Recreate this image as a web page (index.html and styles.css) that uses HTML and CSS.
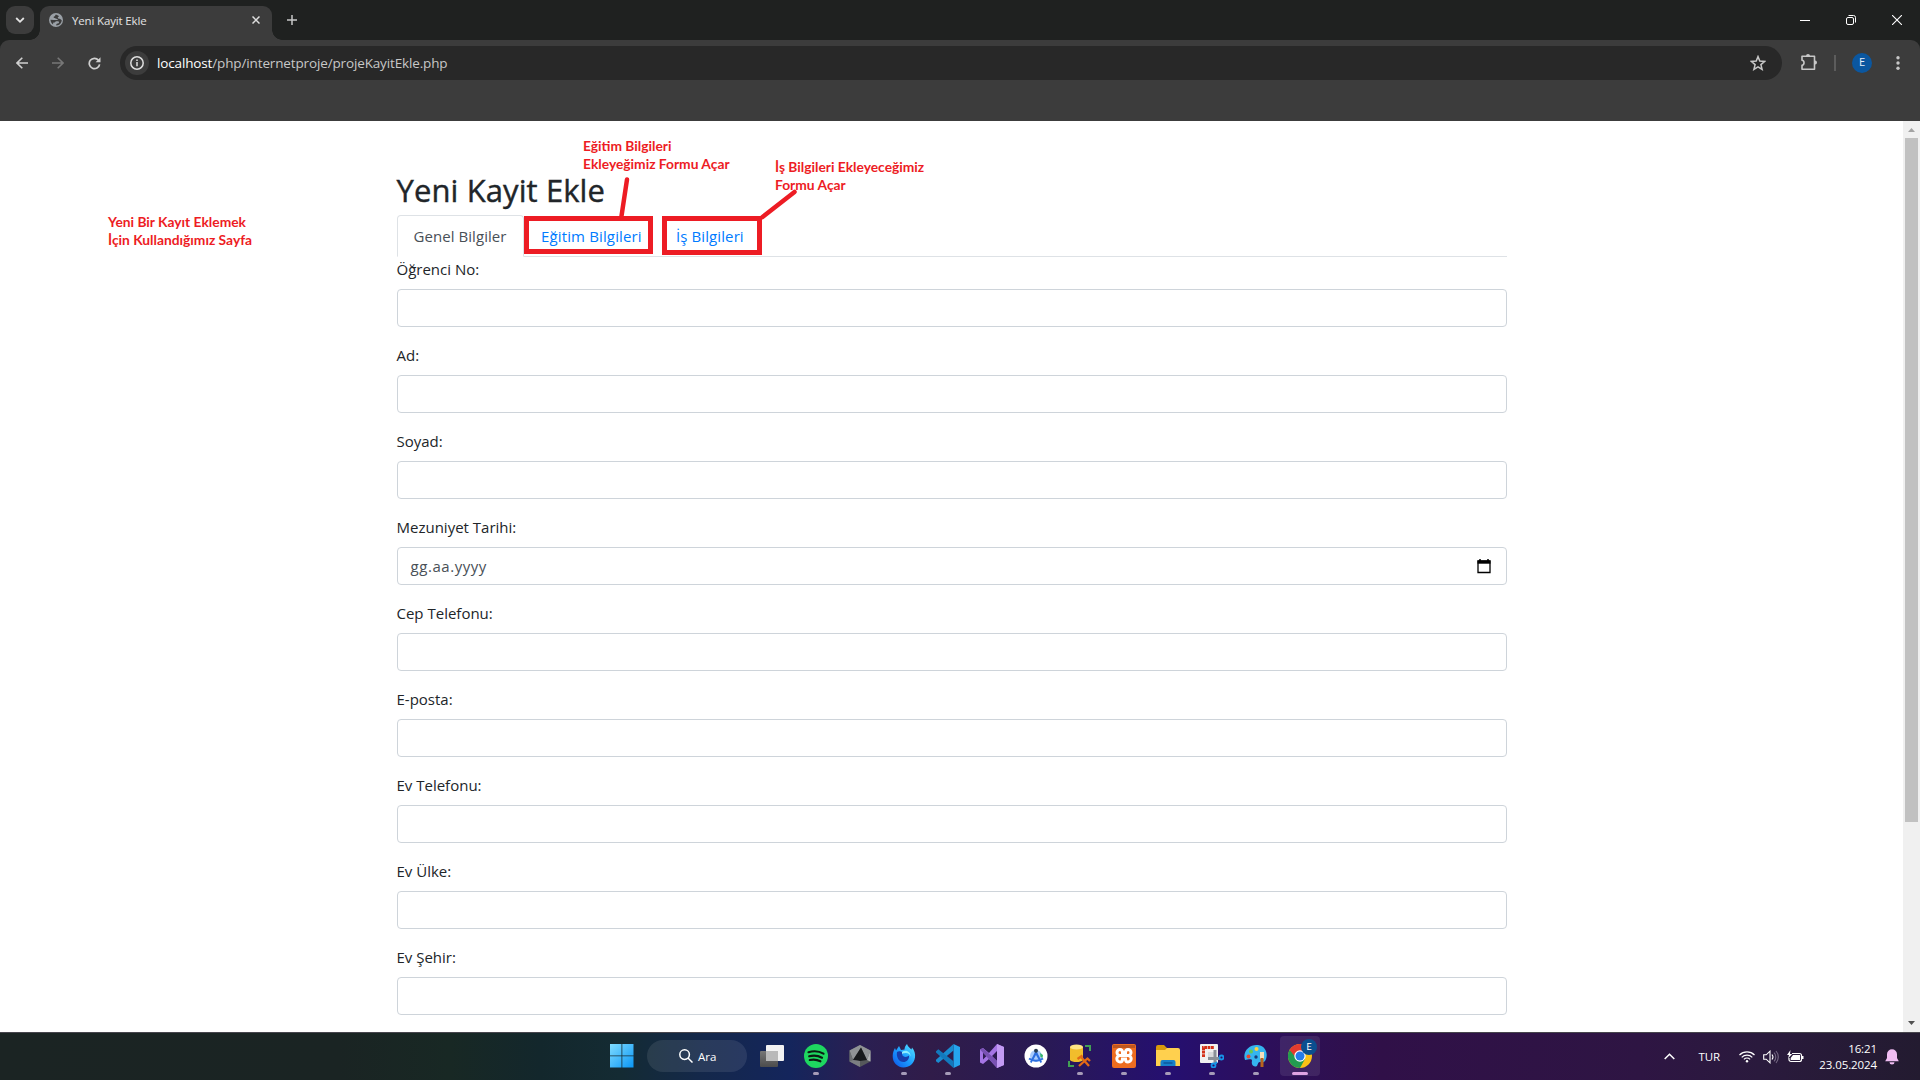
FILE: index.html
```html
<!DOCTYPE html>
<html lang="tr">
<head>
<meta charset="utf-8">
<title>Yeni Kayit Ekle</title>
<link rel="stylesheet" href="styles.css">
</head>
<body>
<div class="screen">
  <header class="chrome">
    <div class="tabstrip">
      <button class="tab-search"><svg width="10" height="10" viewBox="0 0 10 10"><path d="M1.2 3 5 6.8 8.8 3" fill="none" stroke="#e3e3e3" stroke-width="1.8"/></svg></button>
      <div class="browser-tab">
        <svg class="favicon" width="14" height="14" viewBox="0 0 14 14"><circle cx="7" cy="7" r="7" fill="#9aa0a6"/><path d="M6.8 1.4c-1 1-.2 1.700-1.800 2.200-.8.500-.3 1.400.5 1.300 1.200-.2 1 .9 2.200.9 1 0 1.300.8.800 1.300H4.800L1.500 6.800c0 1.500.8 3.800 2.600 4.700V10.200c0-.7.800-.6 1.400-.7.900-.2.700-1.200 1.800-1.200h1.400c.7 0 1.400.500 1.300 1.300-.1.700-.8.900-1.500 1-1 .1-1.300.8-1.200 1.800 3 .2 5.500-2.300 5.400-5.400-1.200-.2-1.100-1.200-2.200-1.200-.9 0-1.700-.4-1.700-1.300 0-.8 1.300-.6 1.200-1.500C8.400 2.200 7.600 1.500 6.800 1.400z" fill="#3c3c3c"/></svg>
        <span class="tab-title">Yeni Kayit Ekle</span>
        <svg width="8" height="8" viewBox="0 0 8 8"><path d="M.5.5l7 7M7.500.5l-7 7" stroke="#dedede" stroke-width="1.500"/></svg>
      </div>
      <svg class="new-tab" width="10" height="10" viewBox="0 0 10 10"><path d="M5 0v10M0 5h10" stroke="#c7c7c7" stroke-width="1.500"/></svg>
      <div class="window-buttons">
        <svg width="10" height="10" viewBox="0 0 10 10"><path d="M0 5.500h10" stroke="#fff"/></svg>
        <svg width="10" height="10" viewBox="0 0 10 10" fill="none" stroke="#fff"><rect x=".5" y="2.500" width="7" height="7" rx="1.500"/><path d="M2.500.5h5a2 2 0 0 1 2 2v5"/></svg>
        <svg width="10" height="10" viewBox="0 0 10 10"><path d="M0 0l10 10M10 0L0 10" stroke="#fff" stroke-width="1.100"/></svg>
      </div>
    </div>
    <div class="toolbar">
      <div class="nav-buttons">
        <svg width="12" height="12" viewBox="0 0 12 12" fill="none" stroke="#d0d0d0" stroke-width="1.600"><path d="M12 6H1.200M6.300.7 1 6l5.300 5.300"/></svg>
        <svg width="12" height="12" viewBox="0 0 12 12" fill="none" stroke="#777" stroke-width="1.600"><path d="M0 6h10.800M5.700.7 11 6l-5.300 5.300"/></svg>
        <svg width="13" height="13" viewBox="0 0 13 13"><path d="M11.600 7.300A5.200 5.200 0 1 1 10.500 3.200" fill="none" stroke="#d0d0d0" stroke-width="1.700"/><path d="M12.500.3v5H7.600z" fill="#d0d0d0"/></svg>
      </div>
      <div class="omnibox">
        <span class="site-info"><svg width="14" height="14" viewBox="0 0 14 14"><circle cx="7" cy="7" r="6.200" fill="none" stroke="#dedede" stroke-width="1.500"/><path d="M7 6v4.300M7 3.500v1.500" stroke="#dedede" stroke-width="1.500"/></svg></span>
        <span class="url"><b>localhost</b>/php/internetproje/projeKayitEkle.php</span>
        <svg class="star" width="16" height="16" viewBox="0 0 16 16"><path d="M8 1.600l1.800 4.500 4.800.4-3.700 3.100 1.200 4.800L8 11.800l-4.100 2.600 1.200-4.800L1.400 6.500l4.800-.4z" fill="none" stroke="#c7c7c7" stroke-width="1.500"/></svg>
      </div>
      <svg class="ext" width="18" height="18" viewBox="0 0 18 18"><path d="M2 3.300h12.500v13H2v-3.900c2.700-.4 2.700-4.700 0-5.100z" fill="none" stroke="#c7c7c7" stroke-width="1.600" stroke-linejoin="round"/><path d="M6 3a2 2 0 0 1 4 0zM15 7.500a2 2 0 0 1 0 4z" fill="#c7c7c7"/></svg>
      <span class="divider"></span>
      <span class="avatar">E</span>
      <svg class="menu" width="4" height="14" viewBox="0 0 4 14" fill="#c7c7c7"><circle cx="2" cy="1.800" r="1.700"/><circle cx="2" cy="7" r="1.700"/><circle cx="2" cy="12.200" r="1.700"/></svg>
    </div>
  </header>

  <main class="viewport">
    <div class="page">
      <div class="container">
        <h2>Yeni Kayit Ekle</h2>
        <ul class="nav-tabs">
          <li class="active genel">Genel Bilgiler</li>
          <li class="egitim">Eğitim Bilgileri</li>
          <li class="is">İş Bilgileri</li>
        </ul>
        <form>
          <div class="form-group"><label>Öğrenci No:</label><div class="control"></div></div>
          <div class="form-group"><label>Ad:</label><div class="control"></div></div>
          <div class="form-group"><label>Soyad:</label><div class="control"></div></div>
          <div class="form-group"><label>Mezuniyet Tarihi:</label><div class="control date"><span>gg.aa.yyyy</span><svg width="14" height="15" viewBox="0 0 14 15"><path d="M3 0v2M11 0v2" stroke="#000" stroke-width="1.500"/><path d="M1 2h12v11.500H1z" fill="none" stroke="#000" stroke-width="1.300"/><path d="M.5 1.500h13v3.200H.5z"/></svg></div></div>
          <div class="form-group"><label>Cep Telefonu:</label><div class="control"></div></div>
          <div class="form-group"><label>E-posta:</label><div class="control"></div></div>
          <div class="form-group"><label>Ev Telefonu:</label><div class="control"></div></div>
          <div class="form-group"><label>Ev Ülke:</label><div class="control"></div></div>
          <div class="form-group"><label>Ev Şehir:</label><div class="control"></div></div>
        </form>
      </div>
    </div>
    <div class="scrollbar">
      <svg width="7" height="4" viewBox="0 0 7 4"><path d="M0 4 3.500 0 7 4z" fill="#a3a3a3"/></svg>
      <div class="thumb"></div>
      <svg width="7" height="4" viewBox="0 0 7 4"><path d="M0 0l3.500 4L7 0z" fill="#505050"/></svg>
    </div>
  </main>

  <footer class="taskbar">
    <div class="apps">
      <div class="slot"><svg width="24" height="24" viewBox="0 0 24 24"><defs><linearGradient id="win" x1="0" y1="0" x2="1" y2="1"><stop offset="0" stop-color="#80dcff"/><stop offset="1" stop-color="#0a96f5"/></linearGradient></defs><path d="M0 0h11.500v11.500H0zM12.300 0h11.200v11.500H12.300zM0 12.300h11.500v11.200H0zM12.300 12.300h11.200v11.200H12.300z" fill="url(#win)"/></svg></div>
      <div class="search"><svg width="14" height="14" viewBox="0 0 14 14" fill="none" stroke="#fff" stroke-width="1.500"><circle cx="5.600" cy="5.600" r="4.800"/><path d="M9 9l4.500 4.500"/></svg><span>Ara</span></div>
      <div class="slot"><svg width="24" height="24" viewBox="0 0 24 24"><defs><linearGradient id="tv" x1="0" y1="0" x2="0" y2="1"><stop offset="0" stop-color="#777"/><stop offset="1" stop-color="#4c4c4c"/></linearGradient></defs><rect x="6" y="1" width="18" height="16" rx="1" fill="#f2f2f2"/><rect y="7" width="18" height="16" rx="1" fill="url(#tv)"/><path d="M6 7h12v10H6z" fill="#b9b9b9"/></svg></div>
      <div class="slot open"><svg width="24" height="24" viewBox="0 0 24 24"><circle cx="12" cy="12" r="12" fill="#1ed760"/><path d="M4.500 8.200c5-1.500 10.800-1 15 1.400M5.200 12.300c4.400-1.200 9-.7 12.800 1.400M5.800 16c3.700-.9 7.300-.5 10.600 1.300" fill="none" stroke="#0c1b12" stroke-width="2.200" stroke-linecap="round"/></svg></div>
      <div class="slot"><svg width="22" height="24" viewBox="0 0 22 24"><path d="M11 1l10.500 5.500v11L11 23 .5 17.500v-11z" fill="#55585b"/><path d="M11 1l10.500 5.500L18 16 12 3.500 4 16 .5 6.500z" fill="#909396"/><path d="M.5 6.500L4 16l-3.500 1.500z" fill="#6b6e72"/><path d="M12 3.500L18 16l-7 1-7-1z" fill="#17191c"/><path d="M.5 17.500L4 16l7 1v6z" fill="#7b7e82"/><path d="M18 16l3.500-9.500v11z" fill="#b0b2b5"/></svg></div>
      <div class="slot open"><svg width="24" height="24" viewBox="0 0 24 24"><defs><linearGradient id="ff" x1="1" y1="0" x2="0" y2="1"><stop offset="0" stop-color="#5be9ff"/><stop offset=".5" stop-color="#1c9fff"/><stop offset="1" stop-color="#0b51e6"/></linearGradient></defs><path d="M15 0c1 3 3 4 4.500 5.500l.5-2c2.500 3 3.500 6 3 10C22 20 17 23.500 11.500 23.500 5 23 .5 18.500.7 12 .7 9 1.700 6 3 4l1 2.500L7 2l2 4 3.500-.5C12.500 3.500 13.500 1.500 15 0z" fill="url(#ff)"/><path d="M5 8c2-1.500 4-.5 5 0h3l-3 2.500c1 3 5 3 7 1 .5 4-2.500 6.500-5.500 6.500C7 18 4 13 5 8z" fill="#183caa"/><path d="M10 8c4-3 9 0 8.500 4.500C18 9 14 8 10 10z" fill="#8ceeff"/></svg></div>
      <div class="slot open"><svg width="24" height="24" viewBox="0 0 24 24"><path d="M17.500 0L24 3v18l-6.500 3z" fill="#25a4ee"/><path d="M17.500 0v6.500L2.300 19 0 17.200v-1.500z" fill="#198bd0"/><path d="M0 7.300L2.300 5.300 17.500 17.300V24L0 8.500z" fill="#1279bd"/></svg></div>
      <div class="slot"><svg width="24" height="24" viewBox="0 0 24 24"><path d="M0 5.500L3 4l6 5L17 0l7 3v18l-7 3-8-9-6 5-3-1.500zM3 8.500v7L6.500 12zM17 7l-5 5 5 5z" fill="#a575e5" fill-rule="evenodd"/><path d="M17 0l7 3v18l-7 3z" fill="#c39bf4"/><path d="M0 5.500L3 4l14 13v7z" fill="#7952b3"/></svg></div>
      <div class="slot"><svg width="24" height="24" viewBox="0 0 24 24"><circle cx="12" cy="12" r="11.500" fill="#fff"/><circle cx="12" cy="12" r="6" fill="#a9cbfc"/><path d="M12 6l6 12-1.500 1L12 11l-4.500 8L6 18z" fill="#2d6fe0"/><path d="M5 14.500c4 3 10 3 14 0" fill="none" stroke="#2d6fe0" stroke-width="2"/><circle cx="12" cy="6.700" r="2" fill="#263b50"/><path d="M16 9l3 2-.5 3-2-1z" fill="#35b36a"/></svg></div>
      <div class="slot open"><svg width="24" height="24" viewBox="0 0 24 24"><path d="M17 2h5v5M1 17v5h5" fill="none" stroke="#42a054" stroke-width="2"/><path d="M2 3v13c2 2.700 11 2.700 13 0V3z" fill="#f1bd2c"/><ellipse cx="8.500" cy="3" rx="6.500" ry="2.500" fill="#ffe484"/><path d="M11 22l9-8M13 13l8 9M9.500 15l5-3.500M19 14l3 3" stroke="#e36a16" stroke-width="2.300"/></svg></div>
      <div class="slot open"><svg width="24" height="24" viewBox="0 0 24 24"><rect width="24" height="24" rx="2" fill="#ee6d20"/><path d="M1 1h22v3H1z" fill="#bd5720"/><g fill="none" stroke="#fff" stroke-width="3"><path d="M8 5.500a3 3 0 0 0 0 6h8a3 3 0 0 0 0-6c-2 0-2.500 1.500-2.500 3h-3c0-1.500-.5-3-2.500-3zM8 11.500a3.200 3.200 0 0 0 0 6.400c2 0 2.500-1.500 2.500-3h3c0 1.500.5 3 2.500 3a3.200 3.200 0 0 0 0-6.400"/></g></svg></div>
      <div class="slot open"><svg width="24" height="24" viewBox="0 0 24 24"><path d="M0 3a2 2 0 0 1 2-2h6l3 3h11v8H0z" fill="#d99a0b"/><path d="M0 6h9l2-2h11a2 2 0 0 1 2 2v16H0z" fill="#ffd04e"/><path d="M4.500 22v-4a2 2 0 0 1 2-2h11a2 2 0 0 1 2 2v4z" fill="#1780cb"/><path d="M7.500 19h9" stroke="#0e579b" stroke-width="1.500"/></svg></div>
      <div class="slot open"><svg width="24" height="24" viewBox="0 0 24 24"><rect width="18" height="19" rx="1" fill="#f0f0f0"/><path d="M3.500 13V3.500H14" fill="none" stroke="#d33119" stroke-width="3" stroke-dasharray="2.800 .6"/><path d="M8 8h6v6H8z" fill="#d8dadc"/><path d="M15 6v14M8 14.500h12" stroke="#8a9097" stroke-width="3"/><g fill="none" stroke="#1694ea" stroke-width="1.800"><circle cx="21.500" cy="13.500" r="2"/><circle cx="13.500" cy="21.500" r="2"/><path d="M15 20l2-2"/></g></svg></div>
      <div class="slot open"><svg width="24" height="24" viewBox="0 0 24 24"><path d="M1 16C-2 7 6 0 14 1c8 1 10 9 8 14-1 3-3 4-6 3-2 0-2 2-3 4-4 2-6-2-5-5 0-3-4-1-7-1z" fill="#35b5ef"/><circle cx="4.500" cy="12.500" r="2" fill="#e54832"/><circle cx="7" cy="7.500" r="2" fill="#65c754"/><circle cx="12.500" cy="5" r="2" fill="#ffd23f"/><circle cx="12" cy="13" r="1.700" fill="#163e7c"/><path d="M16 8h4v7h-4z" fill="#f3dfbc"/><path d="M16.500 14h3v9h-3z" fill="#b8641e"/></svg></div>
      <div class="slot open current"><svg width="24" height="24" viewBox="0 0 24 24"><circle cx="12" cy="12" r="12" fill="#fbc116"/><path d="M12 12L1.600 6A12 12 0 0 0 12 24l5-9z" fill="#229c50"/><path d="M12 12H6.500L1.600 6a12 12 0 0 1 20.800 0z" fill="#e33b2e"/><circle cx="12" cy="12" r="5.700" fill="#fff"/><circle cx="12" cy="12" r="4.500" fill="#267ce9"/></svg><span class="badge">E</span></div>
    </div>
    <div class="tray">
      <svg class="chev" width="11" height="7" viewBox="0 0 11 7"><path d="M.7 6l4.800-4.800L10.300 6" fill="none" stroke="#fff" stroke-width="1.500"/></svg>
      <span class="lang">TUR</span>
      <svg class="wifi" width="16" height="13" viewBox="0 0 16 13" fill="none" stroke="#fff" stroke-width="1.200"><path d="M.5 5a10.600 10.600 0 0 1 15 0M2.700 7.300a7.500 7.500 0 0 1 10.600 0M4.900 9.400a4.400 4.400 0 0 1 6.200 0"/><circle cx="8" cy="11.300" r="1.200" fill="#fff" stroke="none"/></svg>
      <svg class="vol" width="17" height="14" viewBox="0 0 17 14" fill="none" stroke="#fff" stroke-width="1.100"><path d="M.7 4.800h2.500L7 1.200v11.600L3.200 9.200H.7z"/><path d="M9 4.500a4 4 0 0 1 0 5"/><path d="M11 2.700a6 6 0 0 1 0 8.600M13 1a9 9 0 0 1 0 12" stroke="#776a85"/></svg>
      <svg class="bat" width="17" height="14" viewBox="0 0 17 14"><path d="M5 3.500h7.500a2 2 0 0 1 2 2v4a2 2 0 0 1-2 2H4a2 2 0 0 1-2-2V8" fill="none" stroke="#fff" stroke-width="1.200"/><path d="M6 5h7v5H3.700V8zM15 6h1.500v3H15zM3.500 0L0 5h2L1 8.500 5.200 4H3z" fill="#fff"/></svg>
      <div class="clock"><span>16:21</span><span>23.05.2024</span></div>
      <svg class="bell" width="14" height="16" viewBox="0 0 14 16" fill="#f1bdf3"><path d="M7 .3a5 5 0 0 1 5 5V9l1.800 3.300H.2L2 9V5.300a5 5 0 0 1 5-5zM4.500 13.300h5a2.500 2.200 0 0 1-5 0z"/></svg>
    </div>
  </footer>

  <div class="note note-page">Yeni Bir Kayıt Eklemek<br>İçin Kullandığımız Sayfa</div>
  <div class="note note-edu">Eğitim Bilgileri<br>Ekleyeğimiz Formu Açar</div>
  <div class="note note-job">İş Bilgileri Ekleyeceğimiz<br>Formu Açar</div>
  <svg class="marks" width="280" height="90" viewBox="510 170 280 90" fill="none" stroke="#ed1c24"><path d="M526.500 218.500h124v33h-124zM664.500 218.500h95v34h-95z" stroke-width="5"/><path d="M627 179.500L621.500 216" stroke-width="4.500" stroke-linecap="round"/></svg>
  <svg class="pointer" width="50" height="40" viewBox="755 185 50 40" fill="none" stroke="#ed1c24"><path d="M794.500 192L762.500 217" stroke-width="4.500" stroke-linecap="round"/></svg>
</div>
</body>
</html>
```
FILE: styles.css
```css
* { box-sizing: border-box; }
body { margin: 0; font-family: "Open Sans", "Noto Sans", sans-serif; overflow: hidden; }
svg { display: block; flex: none; }
.screen { position: relative; width: 1920px; height: 1080px; display: flex; flex-direction: column; background: #fff; }

/* browser frame */
.chrome { height: 121px; background: #1f2120; flex: none; }
.tabstrip { height: 40px; display: flex; align-items: flex-start; padding-left: 6px; }
.tab-search { width: 28px; height: 28px; margin: 6px 6px 0 0; padding: 0; border: 0; border-radius: 9px; background: #3c3c3c; display: flex; align-items: center; justify-content: center; }
.browser-tab { position: relative; width: 232px; height: 34px; margin-top: 6px; padding: 0 12px 6px 9px; border-radius: 9px 9px 0 0; background: #3c3c3c; display: flex; align-items: center; }
.browser-tab::before, .browser-tab::after { content: ""; position: absolute; bottom: 0; width: 10px; height: 10px; }
.browser-tab::before { right: 100%; background: radial-gradient(circle at 0 0, transparent 9.500px, #3c3c3c 10px); }
.browser-tab::after { left: 100%; background: radial-gradient(circle at 100% 0, transparent 9.500px, #3c3c3c 10px); }
.tab-title { flex: 1; margin-left: 9px; padding-top: 1px; font-size: 11.500px; line-height: 16px; letter-spacing: -.15px; color: #e3e3e3; }
.new-tab { margin: 15px 0 0 15px; }
.window-buttons { margin: 15px 18px 0 auto; display: flex; gap: 36px; }
.toolbar { height: 81px; padding: 6px 20px 0 16px; border-radius: 9px 9px 0 0; background: #3c3c3c; display: flex; align-items: flex-start; }
.nav-buttons { height: 34px; width: 104px; display: flex; align-items: center; gap: 24px; }
.omnibox { width: 1662px; height: 34px; padding: 0 16px 0 5px; border-radius: 17px; background: #282828; display: flex; align-items: center; }
.site-info { width: 24px; height: 24px; border-radius: 50%; background: #3c3c3c; display: flex; align-items: center; justify-content: center; }
.url { flex: 1; margin-left: 8px; font-size: 13.500px; line-height: 20px; letter-spacing: -.14px; color: #c7c7c7; }
.url b { font-weight: 400; color: #fff; }
.ext { margin: 7px 0 0 18px; }
.divider { width: 2px; height: 16px; margin: 9px 0 0 16px; background: #5c5c5c; }
.avatar { width: 20px; height: 20px; margin: 7px 0 0 16px; border-radius: 50%; background: #0b57a0; color: #e8eef8; font: 10px/20px Roboto, sans-serif; text-align: center; }
.menu { margin: 10px 0 0 24px; }

/* web page */
.viewport { height: 911px; flex: none; display: flex; overflow: hidden; }
.page { flex: 1; height: 911px; overflow: hidden; }
.container { width: 1140px; margin: 48px auto 0; padding: 0 15px; color: #212529; font-size: 15px; line-height: 24px; }
h2 { margin: 0 0 6px; padding-top: 2px; font-size: 31px; font-weight: 500; line-height: 38.400px; letter-spacing: .1px; -webkit-text-stroke: .4px #212529; }
.nav-tabs { list-style: none; margin: 0; padding: 0; display: flex; border-bottom: 1px solid #dee2e6; }
.nav-tabs li { height: 42px; margin-bottom: -1px; padding: 8px 0 0 16px; border: 1px solid transparent; border-radius: 4px 4px 0 0; color: #007bff; }
.nav-tabs .active { color: #495057; background: #fff; border-color: #dee2e6 #dee2e6 #fff; }
.genel { width: 127.500px; letter-spacing: .06px; }
.egitim { width: 135px; letter-spacing: .14px; }
.is { width: 100px; letter-spacing: .1px; }
.form-group { margin-bottom: 16px; }
label { display: block; margin-bottom: 8px; }
.control { height: 38px; border: 1px solid #ced4da; border-radius: 4px; background: #fff; }
.date { display: flex; align-items: center; justify-content: space-between; padding: 0 15px 0 13px; color: #495057; letter-spacing: .55px; }
.scrollbar { width: 17px; background: #f0f0f0; display: flex; flex-direction: column; align-items: center; padding: 7px 0; }
.thumb { width: 13px; height: 684px; margin: 6px 0 auto; background: #c1c1c1; }

/* taskbar */
.taskbar { height: 48px; flex: none; border-top: 1px solid #47454d; display: flex; background: linear-gradient(90deg, #1b2423 0, #1a2423 340px, #182824 450px, #13272c 540px, #142b33 620px, #14284a 700px, #14255c 790px, #2a1f52 860px, #301c49 930px, #291a54 1040px, #250f70 1170px, #2c0f5c 1260px, #301048 1380px, #2e1543 1640px, #2a1a3d 1760px, #231b30 1920px); }
.apps { padding-left: 600px; display: flex; align-items: flex-start; }
.slot { position: relative; width: 44px; height: 47px; padding-top: 11px; display: flex; justify-content: center; align-items: flex-start; }
.open::after { content: ""; position: absolute; left: 19px; top: 39px; width: 6px; height: 3px; border-radius: 2px; background: #a69bb8; }
.current::before { content: ""; position: absolute; left: 2px; top: 3px; width: 40px; height: 40px; border-radius: 4px; background: rgba(255,255,255,.09); }
.current svg { position: relative; }
.current::after { left: 14px; width: 16px; background: #dfa3e3; }
.badge { position: absolute; left: 23px; top: 6px; width: 16px; height: 16px; border-radius: 50%; background: #0b4f8f; color: #fff; font: 9px/16px Roboto, sans-serif; text-align: center; }
.search { width: 100px; height: 32px; margin: 7px 3px 0; padding-left: 32px; border-radius: 16px; background: rgba(255,255,255,.09); display: flex; align-items: center; gap: 5px; color: #fff; font-size: 11.500px; }
.tray { margin-left: auto; padding-right: 21px; display: flex; align-items: center; color: #fff; font-size: 11.500px; }
.chev { margin-right: 1px; }
.lang { margin: 0 19px 0 22px; letter-spacing: -.1px; }
.vol { margin-left: 8px; }
.bat { margin-left: 7px; }
.clock { width: 73px; display: flex; flex-direction: column; align-items: flex-end; line-height: 16px; letter-spacing: -.1px; white-space: nowrap; }
.bell { margin-left: 8px; }

/* annotations */
.note { position: absolute; color: #ed1c24; font: 700 13.800px/18px Lato, sans-serif; white-space: nowrap; }
.note-page { left: 108px; top: 213px; }
.note-edu { left: 583px; top: 137px; }
.note-job { left: 775px; top: 158px; }
.marks { position: absolute; left: 510px; top: 170px; }
.pointer { position: absolute; left: 755px; top: 185px; }
```
